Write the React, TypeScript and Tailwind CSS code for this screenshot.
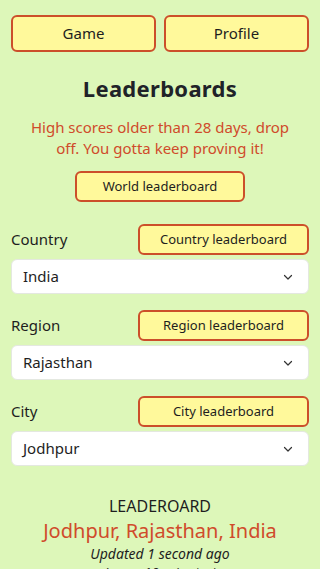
import React from "react";

const Chevron = () => (
  <svg width="12" height="12" viewBox="0 0 24 24" fill="none" stroke="#333" strokeWidth="2.4" strokeLinecap="round" strokeLinejoin="round">
    <path d="M5 9l7 7 7-7" />
  </svg>
);

const Btn = ({ children, className = "" }: { children: React.ReactNode; className?: string }) => (
  <button className={`bg-[#fff99b] border-2 border-[#cc4f2a] rounded-[6px] text-[#1e1e1e] ${className}`}>{children}</button>
);

const Field = ({ label, btn, value }: { label: string; btn: string; value: string }) => (
  <div className="flex flex-col">
    <div className="flex items-center justify-between">
      <span className="text-[15px] text-[#1e1e1e]">{label}</span>
      <Btn className="w-[171px] h-[31px] text-[13px]">{btn}</Btn>
    </div>
    <div className="mt-[4px] h-[35px] bg-white rounded-[6px] border border-[#e4e8e0] flex items-center justify-between pl-[11px] pr-[14px]">
      <span className="text-[15px] text-[#1e1e1e]">{value}</span>
      <Chevron />
    </div>
  </div>
);

export default function App() {
  return (
    <div className="w-[320px] h-[569px] overflow-hidden bg-[#ddf7b9] px-[11px] pt-[15px] flex flex-col" style={{ fontFamily: '"Noto Sans", sans-serif' }}>
      <div className="flex gap-[8px]">
        <Btn className="flex-1 h-[37px] text-[15px]">Game</Btn>
        <Btn className="flex-1 h-[37px] text-[15px]">Profile</Btn>
      </div>
      <h1 className="mt-[20px] text-center text-[22px] leading-[32px] font-bold text-[#1f2328] tracking-[0.3px]">Leaderboards</h1>
      <p className="mt-[13px] text-center text-[15px] leading-[21px] text-[#d04b2b] px-[12px]">
        High scores older than 28 days, drop off. You gotta keep proving it!
      </p>
      <div className="mt-[12px] flex justify-center">
        <Btn className="w-[170px] h-[31px] text-[13px]">World leaderboard</Btn>
      </div>
      <div className="mt-[22px] flex flex-col gap-[16px]">
        <Field label="Country" btn="Country leaderboard" value="India" />
        <Field label="Region" btn="Region leaderboard" value="Rajasthan" />
        <Field label="City" btn="City leaderboard" value="Jodhpur" />
      </div>
      <div className="mt-[28px] flex flex-col items-center">
        <div className="text-[16px] leading-[24px] text-[#1e1e1e]">LEADEROARD</div>
        <div className="text-[20px] leading-[26px] text-[#d04b2b]">Jodhpur, Rajasthan, India</div>
        <div className="text-[14px] leading-[19px] italic text-[#1e1e1e]">Updated 1 second ago</div>
        <div className="text-[14px] leading-[19px] italic text-[#1e1e1e]">(every 10 minutes)</div>
      </div>
    </div>
  );
}
